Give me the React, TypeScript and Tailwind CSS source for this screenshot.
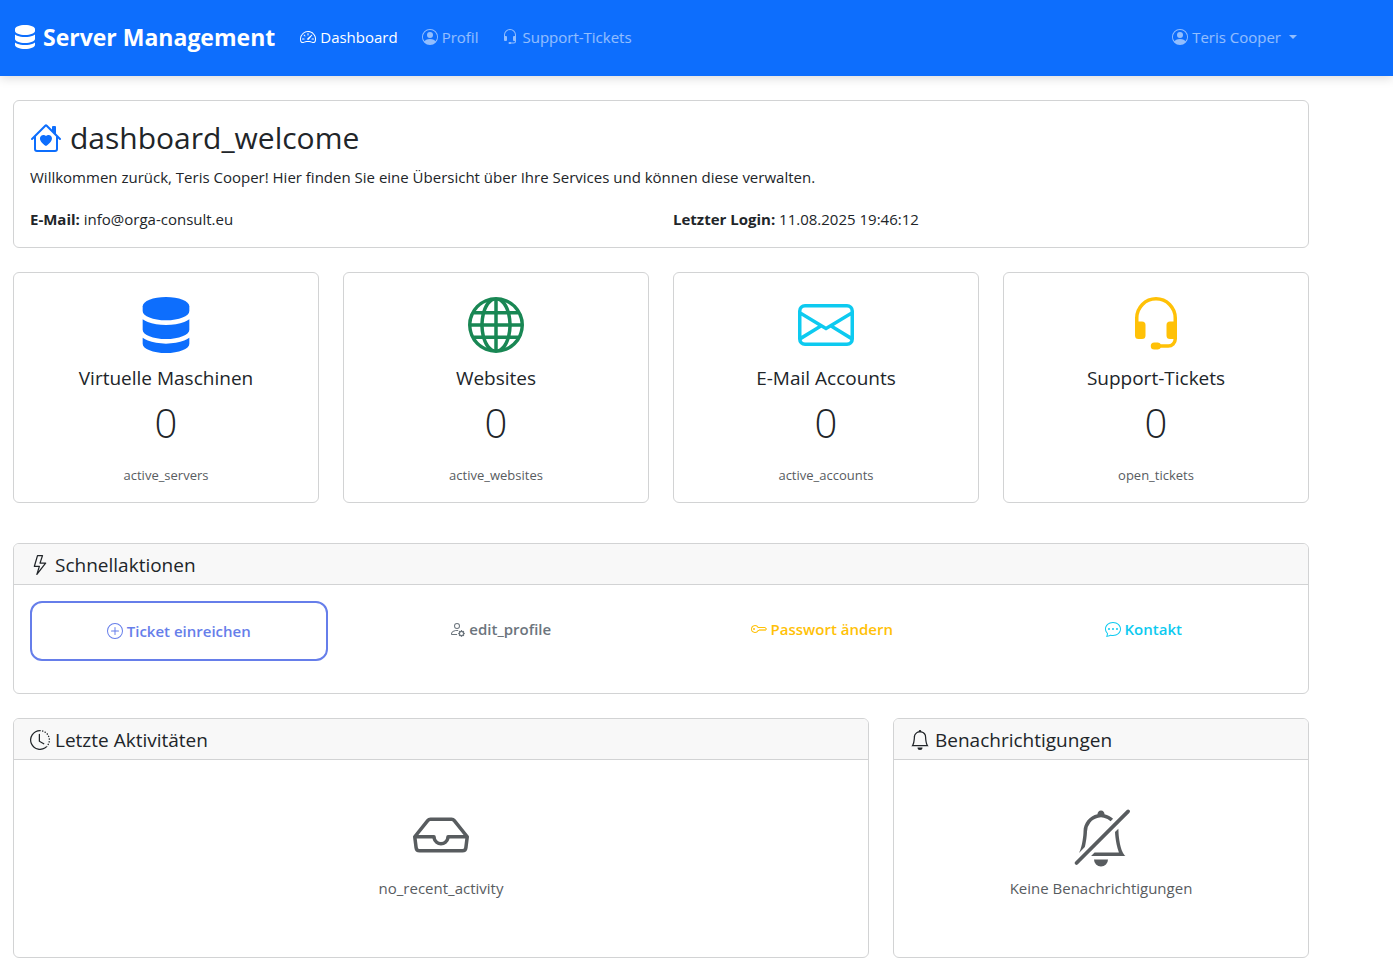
import type { ReactNode } from "react";
import type { IconType } from "react-icons";
import {
  BsBell,
  BsBellSlash,
  BsChatDots,
  BsClockHistory,
  BsEnvelope,
  BsGlobe,
  BsHeadset,
  BsHouseHeart,
  BsInbox,
  BsKey,
  BsLightning,
  BsPersonCircle,
  BsPersonGear,
  BsPlusCircle,
  BsServer,
  BsSpeedometer2,
} from "react-icons/bs";

const navLinks: { label: string; icon: IconType; active?: boolean }[] = [
  { label: "Dashboard", icon: BsSpeedometer2, active: true },
  { label: "Profil", icon: BsPersonCircle },
  { label: "Support-Tickets", icon: BsHeadset },
];

const stats: { title: string; value: number; caption: string; icon: IconType; color: string }[] = [
  { title: "Virtuelle Maschinen", value: 0, caption: "active_servers", icon: BsServer, color: "text-[#0d6efd]" },
  { title: "Websites", value: 0, caption: "active_websites", icon: BsGlobe, color: "text-[#198754]" },
  { title: "E-Mail Accounts", value: 0, caption: "active_accounts", icon: BsEnvelope, color: "text-[#0dcaf0]" },
  { title: "Support-Tickets", value: 0, caption: "open_tickets", icon: BsHeadset, color: "text-[#ffc107]" },
];

const actions: { label: string; icon: IconType; style: string }[] = [
  { label: "Ticket einreichen", icon: BsPlusCircle, style: "h-[60px] rounded-xl border-2 border-[#667eea] text-[#667eea]" },
  { label: "edit_profile", icon: BsPersonGear, style: "h-14 text-[#6c757d]" },
  { label: "Passwort ändern", icon: BsKey, style: "h-14 text-[#ffc107]" },
  { label: "Kontakt", icon: BsChatDots, style: "h-14 text-[#0dcaf0]" },
];

function Card({ className = "", children }: { className?: string; children: ReactNode }) {
  return <section className={`overflow-hidden rounded-md border border-[#d2d3d4] bg-white ${className}`}>{children}</section>;
}

function CardHeader({ icon: Icon, title }: { icon: IconType; title: string }) {
  return (
    <header className="border-b border-[#d2d3d4] bg-[#f8f8f8] px-4 pt-[9px] pb-[7px]">
      <h2 className="flex items-center gap-[5px] text-[19px] leading-6">
        <Icon className="size-5 shrink-0" aria-hidden="true" />
        {title}
      </h2>
    </header>
  );
}

function EmptyState({ icon: Icon, text }: { icon: IconType; text: string }) {
  return (
    <div className="flex flex-col items-center px-4 pt-[47px] pb-14 text-[#585c5f]">
      <Icon className="size-14 overflow-visible" aria-hidden="true" />
      <p className="mt-3 text-[15px] leading-[26px]">{text}</p>
    </div>
  );
}

export default function App() {
  return (
    <div className="min-h-screen bg-white font-['Open_Sans','Noto_Sans',sans-serif] text-[15px] leading-[26px] text-[#212529]">
      <nav className="bg-[#0d6efd] shadow-[0_2px_10px_rgba(0,0,0,0.15)]">
        <div className="flex h-[76px] max-w-[1322px] items-center px-[13px] pb-0.5">
          <a href="#" className="mr-[25px] flex items-center gap-1.5 text-[23px] font-bold text-white">
            <BsServer className="size-6" aria-hidden="true" />
            Server Management
          </a>
          <ul className="flex gap-6">
            {navLinks.map(({ label, icon: Icon, active }) => (
              <li key={label}>
                <a href="#" className={`flex items-center gap-1 ${active ? "text-white" : "text-white/55"}`}>
                  <Icon className="size-4" aria-hidden="true" />
                  {label}
                </a>
              </li>
            ))}
          </ul>
          <button type="button" className="mr-3 ml-auto flex items-center gap-1 text-white/55">
            <BsPersonCircle className="size-4" aria-hidden="true" />
            Teris Cooper
            <span className="ml-1 border-x-4 border-t-4 border-x-transparent border-t-current" aria-hidden="true" />
          </button>
        </div>
      </nav>

      <main className="flex max-w-[1322px] flex-col gap-6 px-[13px] py-6">
        <Card className="px-4 pt-4 pb-[15px]">
          <h1 className="mb-[5px] flex items-center gap-2 text-[30px] leading-[42px]">
            <BsHouseHeart className="size-8 text-[#0d6efd]" aria-hidden="true" />
            dashboard_welcome
          </h1>
          <p className="mb-4">
            Willkommen zurück, Teris Cooper! Hier finden Sie eine Übersicht über Ihre Services und können diese verwalten.
          </p>
          <div className="grid grid-cols-2 gap-6">
            <p>
              <strong>E-Mail:</strong> info@orga-consult.eu
            </p>
            <p>
              <strong>Letzter Login:</strong> 11.08.2025 19:46:12
            </p>
          </div>
        </Card>

        <div className="mb-4 grid grid-cols-4 gap-6">
          {stats.map(({ title, value, caption, icon: Icon, color }) => (
            <Card key={title} className="flex flex-col items-center px-4 pt-6 pb-[17px]">
              <Icon className={`size-14 ${color}`} aria-hidden="true" />
              <h2 className="mt-[13px] text-[19px] leading-6">{title}</h2>
              <p className="mt-[9px] text-[40px] leading-[48px] font-light">{value}</p>
              <p className="mt-[18px] text-[13px] leading-5 text-[#585c5f]">{caption}</p>
            </Card>
          ))}
        </div>

        <Card>
          <CardHeader icon={BsLightning} title="Schnellaktionen" />
          <div className="grid grid-cols-4 items-start gap-6 px-4 pt-4 pb-8">
            {actions.map(({ label, icon: Icon, style }) => (
              <a key={label} href="#" className={`flex items-center justify-center gap-1 font-semibold ${style}`}>
                <Icon className="size-4" aria-hidden="true" />
                {label}
              </a>
            ))}
          </div>
        </Card>

        <div className="grid grid-cols-3 gap-6">
          <Card className="col-span-2">
            <CardHeader icon={BsClockHistory} title="Letzte Aktivitäten" />
            <EmptyState icon={BsInbox} text="no_recent_activity" />
          </Card>
          <Card>
            <CardHeader icon={BsBell} title="Benachrichtigungen" />
            <EmptyState icon={BsBellSlash} text="Keine Benachrichtigungen" />
          </Card>
        </div>
      </main>
    </div>
  );
}
